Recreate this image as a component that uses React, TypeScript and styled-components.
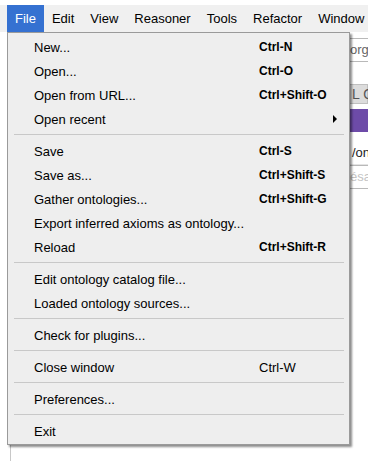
import React from "react";
import styled, { createGlobalStyle } from "styled-components";

const Global = createGlobalStyle`
  html, body { margin: 0; padding: 0; background: #ffffff; }
  body { font-family: "Liberation Sans", Arial, sans-serif; }
`;

const Frame = styled.div`
  position: relative;
  width: 368px;
  height: 461px;
  overflow: hidden;
  background: #ffffff;
  padding-top: 5px;
  box-sizing: border-box;
`;

const MenuBar = styled.div`
  display: flex;
  height: 27px;
  background: #f0f0f0;
  padding-left: 7px;
  white-space: nowrap;
  overflow: hidden;
`;

const BarItem = styled.div<{ $active?: boolean }>`
  flex: none;
  padding: 0 8px;
  font-size: 13px;
  line-height: 27px;
  color: ${(p) => (p.$active ? "#ffffff" : "#000000")};
  background: ${(p) => (p.$active ? "#3571d1" : "transparent")};
`;

const Workspace = styled.div`
  display: flex;
  height: 429px;
`;

const LeftPane = styled.div`
  flex: none;
  width: 330px;
  margin-left: 10px;
  border-left: 1px solid #c8c8c8;
`;

const RightPane = styled.div`
  flex: 1;
  min-width: 0;
  display: flex;
  flex-direction: column;
  padding-top: 6px;
  font-size: 13px;
  white-space: nowrap;
  overflow: hidden;
`;

const Field = styled.div<{ $muted?: boolean }>`
  height: 22px;
  line-height: 22px;
  border: 1px solid #b9b9b9;
  padding-left: 8px;
  color: ${(p) => (p.$muted ? "#c4c4c4" : "#666666")};
  margin-right: -60px;
`;

const ToolStrip = styled.div`
  margin-top: 22px;
  height: 18px;
  line-height: 18px;
  background: #dcdcdc;
  border: 1px solid #c0c0c0;
  padding-left: 10px;
  color: #555555;
  font-size: 14px;
`;

const PurpleBar = styled.div`
  margin-top: 5px;
  height: 23px;
  background: #6d4ba8;
`;

const PathRow = styled.div`
  margin-top: 10px;
  height: 22px;
  line-height: 22px;
  padding-left: 11px;
  color: #222222;
  border-bottom: 1px solid #e4e4e4;
`;

const Dropdown = styled.div`
  position: absolute;
  left: 7px;
  top: 32px;
  width: 343px;
  box-sizing: border-box;
  border: 1px solid #9a9a9a;
  background: #eeeeee;
  padding: 2px 0 1px;
  box-shadow: 2px 2px 2px rgba(0, 0, 0, 0.45);
`;

const Row = styled.div`
  display: grid;
  grid-template-columns: 225px 74px auto;
  align-items: center;
  height: 24px;
  padding-left: 26px;
  font-size: 13px;
  color: #000000;
  white-space: nowrap;
`;

const Label = styled.span``;

const Shortcut = styled.span<{ $bold?: boolean }>`
  font-size: ${(p) => (p.$bold ? "12px" : "13px")};
  font-weight: ${(p) => (p.$bold ? 700 : 400)};
`;

const Arrow = styled.svg`
  display: block;
`;

const Separator = styled.div`
  height: 1px;
  margin: 3px 5px 4px 6px;
  background: #c8c8c8;
`;

type Item = { label: string; key?: string; bold?: boolean; sub?: boolean };

const sections: Item[][] = [
  [
    { label: "New...", key: "Ctrl-N", bold: true },
    { label: "Open...", key: "Ctrl-O", bold: true },
    { label: "Open from URL...", key: "Ctrl+Shift-O", bold: true },
    { label: "Open recent", sub: true },
  ],
  [
    { label: "Save", key: "Ctrl-S", bold: true },
    { label: "Save as...", key: "Ctrl+Shift-S", bold: true },
    { label: "Gather ontologies...", key: "Ctrl+Shift-G", bold: true },
    { label: "Export inferred axioms as ontology..." },
    { label: "Reload", key: "Ctrl+Shift-R", bold: true },
  ],
  [
    { label: "Edit ontology catalog file..." },
    { label: "Loaded ontology sources..." },
  ],
  [{ label: "Check for plugins..." }],
  [{ label: "Close window", key: "Ctrl-W" }],
  [{ label: "Preferences..." }],
  [{ label: "Exit" }],
];

const barItems = ["File", "Edit", "View", "Reasoner", "Tools", "Refactor", "Window"];

export default function App() {
  return (
    <>
      <Global />
      <Frame>
        <MenuBar>
          {barItems.map((b, i) => (
            <BarItem key={b} $active={i === 0}>
              {b}
            </BarItem>
          ))}
        </MenuBar>
        <Workspace>
          <LeftPane />
          <RightPane>
            <Field>organization</Field>
            <ToolStrip>L Query</ToolStrip>
            <PurpleBar />
            <PathRow>/ontology</PathRow>
            <Field $muted>ésactivé</Field>
          </RightPane>
        </Workspace>
        <Dropdown>
          {sections.map((sec, si) => (
            <React.Fragment key={si}>
              {si > 0 && <Separator />}
              {sec.map((it) => (
                <Row key={it.label}>
                  <Label>{it.label}</Label>
                  <Shortcut $bold={it.bold}>{it.key ?? ""}</Shortcut>
                  {it.sub ? (
                    <Arrow width="4" height="8" viewBox="0 0 4 8">
                      <path d="M0 0 L4 4 L0 8 Z" fill="#000" />
                    </Arrow>
                  ) : (
                    <span />
                  )}
                </Row>
              ))}
            </React.Fragment>
          ))}
        </Dropdown>
      </Frame>
    </>
  );
}
